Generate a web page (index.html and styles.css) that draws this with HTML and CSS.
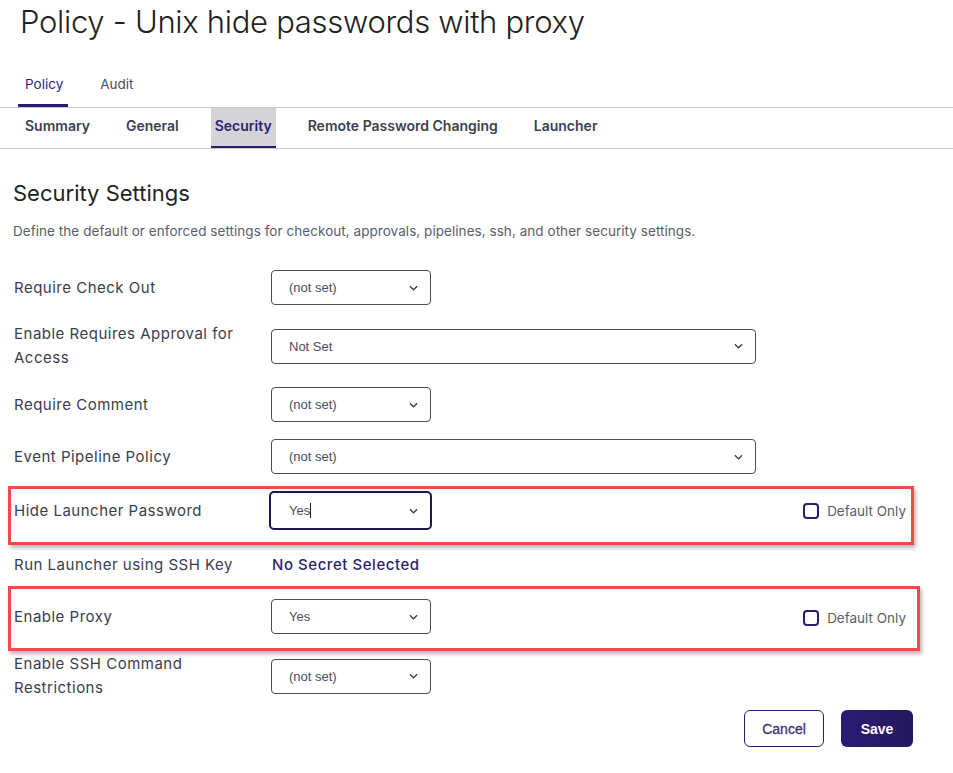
FILE: index.html
```html
<!DOCTYPE html>
<html>
<head>
<meta charset="utf-8">
<link rel="stylesheet" href="styles.css">
</head>
<body>
<div class="page">
  <h1 class="title">Policy - Unix hide passwords with proxy</h1>
  <nav class="tabs-main">
    <span class="tab-main active">Policy</span>
    <span class="tab-main">Audit</span>
  </nav>
  <nav class="tabs-sub">
    <span class="tab-sub">Summary</span>
    <span class="tab-sub">General</span>
    <span class="tab-sub active">Security</span>
    <span class="tab-sub">Remote Password Changing</span>
    <span class="tab-sub">Launcher</span>
  </nav>
  <section class="content">
    <h2 class="section-title">Security Settings</h2>
    <p class="desc">Define the default or enforced settings for checkout, approvals, pipelines, ssh, and other security settings.</p>
    <div class="form">
      <div class="row">
        <div class="label">Require Check Out</div>
        <div class="select small"><span>(not set)</span><svg class="chev" viewBox="0 0 10 6"><path d="M1 1l4 4 4-4"/></svg></div>
      </div>
      <div class="row">
        <div class="label">Enable Requires Approval for Access</div>
        <div class="select wide"><span>Not Set</span><svg class="chev" viewBox="0 0 10 6"><path d="M1 1l4 4 4-4"/></svg></div>
      </div>
      <div class="row">
        <div class="label">Require Comment</div>
        <div class="select small"><span>(not set)</span><svg class="chev" viewBox="0 0 10 6"><path d="M1 1l4 4 4-4"/></svg></div>
      </div>
      <div class="row">
        <div class="label">Event Pipeline Policy</div>
        <div class="select wide"><span>(not set)</span><svg class="chev" viewBox="0 0 10 6"><path d="M1 1l4 4 4-4"/></svg></div>
      </div>
      <div class="row marked mark-a">
        <div class="label">Hide Launcher Password</div>
        <div class="select small focused"><span>Yes<i class="caret"></i></span><svg class="chev" viewBox="0 0 10 6"><path d="M1 1l4 4 4-4"/></svg></div>
        <label class="check"><span class="box"></span>Default Only</label>
      </div>
      <div class="row">
        <div class="label">Run Launcher using SSH Key</div>
        <div class="link">No Secret Selected</div>
      </div>
      <div class="row marked mark-b">
        <div class="label">Enable Proxy</div>
        <div class="select small"><span>Yes</span><svg class="chev" viewBox="0 0 10 6"><path d="M1 1l4 4 4-4"/></svg></div>
        <label class="check"><span class="box"></span>Default Only</label>
      </div>
      <div class="row last">
        <div class="label">Enable SSH Command Restrictions</div>
        <div class="select small"><span>(not set)</span><svg class="chev" viewBox="0 0 10 6"><path d="M1 1l4 4 4-4"/></svg></div>
      </div>
    </div>
    <div class="actions">
      <button class="btn cancel">Cancel</button>
      <button class="btn save">Save</button>
    </div>
  </section>
</div>
</body>
</html>
```
FILE: styles.css
```css
* { box-sizing: border-box; }
html, body { margin: 0; padding: 0; background: #fff; }
body { font-family: Inter, "Noto Sans", sans-serif; color: #3a3d4d; }
.page { width: 953px; height: 773px; overflow: hidden; }

.title {
  margin: 0;
  padding: 2px 0 0 20px;
  font-size: 31px;
  font-weight: 300;
  line-height: 40px;
  color: #1f1f24;
  letter-spacing: -0.3px;
}

.tabs-main {
  display: flex;
  gap: 25px;
  margin-top: 24px;
  padding-left: 18px;
  border-bottom: 1px solid #c8c8cc;
  height: 42px;
}
.tab-main {
  padding: 10px 5px 0 7px;
  font-size: 13.5px;
  color: #4b4e5e;
  height: 41px;
}
.tab-main.active { color: #2d1f7a; border-bottom: 3px solid #2a1b72; }

.tabs-sub {
  display: flex;
  gap: 28px;
  padding-left: 21px;
  border-bottom: 1px solid #c8c8cc;
  height: 41px;
}
.tab-sub {
  padding: 9px 4px 0;
  font-size: 14px;
  font-weight: 600;
  color: #3b3f51;
  height: 40px;
}
.tab-sub.active {
  background: #d4d4d6;
  color: #2d1f7a;
  border-bottom: 2px solid #2a1b72;
}

.content { padding: 0 0 0 13px; }
.section-title {
  margin: 29px 0 0;
  font-size: 22px;
  font-weight: 400;
  line-height: 30px;
  color: #1f1f24;
}
.desc {
  margin: 14px 0 0;
  font-size: 13.5px;
  letter-spacing: 0.05px;
  color: #5a5d6b;
  line-height: 18px;
}

.form { display: flex; flex-direction: column; gap: 17px; margin-top: 30px; padding-left: 1px; }
.row {
  position: relative;
  display: flex;
  align-items: center;
  min-height: 35px;
}
.row.last { margin-top: 1px; }
.label {
  width: 257px;
  flex: none;
  padding-right: 20px;
  font-size: 15px;
  letter-spacing: 0.5px;
  line-height: 24px;
  color: #3a3d4d;
}
.select {
  height: 35px;
  border: 1px solid #4a4d5e;
  border-radius: 4px;
  display: flex;
  align-items: center;
  justify-content: space-between;
  padding: 0 12px 0 17px;
  font-family: "Liberation Sans", Arial, sans-serif;
  font-size: 13px;
  color: #4a4d5e;
  background: #fff;
}
.select.small { width: 160px; }
.select.wide { width: 485px; }
.select.focused {
  border: 2px solid #1f1650;
  height: 39px;
  width: 163px;
  margin-left: -2px;
  padding: 0 12px 0 18px;
  border-radius: 5px;
}
.caret { display: inline-block; width: 1px; height: 15px; background: #222; vertical-align: -3px; }
.chev { width: 9px; height: 6px; fill: none; stroke: #3a3d4d; stroke-width: 1.4; }
.link { font-size: 15px; letter-spacing: 0.55px; color: #2d1f6b; font-weight: 500; padding-left: 1px; }

.check {
  margin-left: auto;
  display: flex;
  align-items: center;
  gap: 8px;
  font-size: 13.5px;
  color: #5a5d6b;
  margin-right: 47px;
}
.mark-b .check { margin-top: 2px; }
.box {
  width: 16px; height: 16px;
  border: 2px solid #2b1d6b;
  border-radius: 4px;
  display: inline-block;
}

.marked::after {
  content: "";
  position: absolute;
  border: 3px solid #f04a4a;
  box-shadow: 2px 3px 4px rgba(0,0,0,0.28);
  pointer-events: none;
}
.mark-a::after { left: -6px; top: -5px; width: 900px; height: 53px; }
.mark-b::after { left: -6px; top: -13px; width: 906px; height: 59px; }

.actions {
  display: flex;
  justify-content: flex-end;
  gap: 17px;
  margin-top: 10px;
  padding-right: 40px;
}
.btn {
  height: 37px;
  border-radius: 6px;
  font-family: "Liberation Sans", Arial, sans-serif;
  font-size: 14px;
  font-weight: 700;
  cursor: pointer;
}
.cancel { width: 80px; background: #fff; border: 1px solid #2b1d6b; color: #3b3470; font-weight: 400; -webkit-text-stroke: 0.3px #3b3470; }
.save { width: 72px; background: linear-gradient(90deg, #2b1b75, #24195e); border: none; color: #fff; }
```
